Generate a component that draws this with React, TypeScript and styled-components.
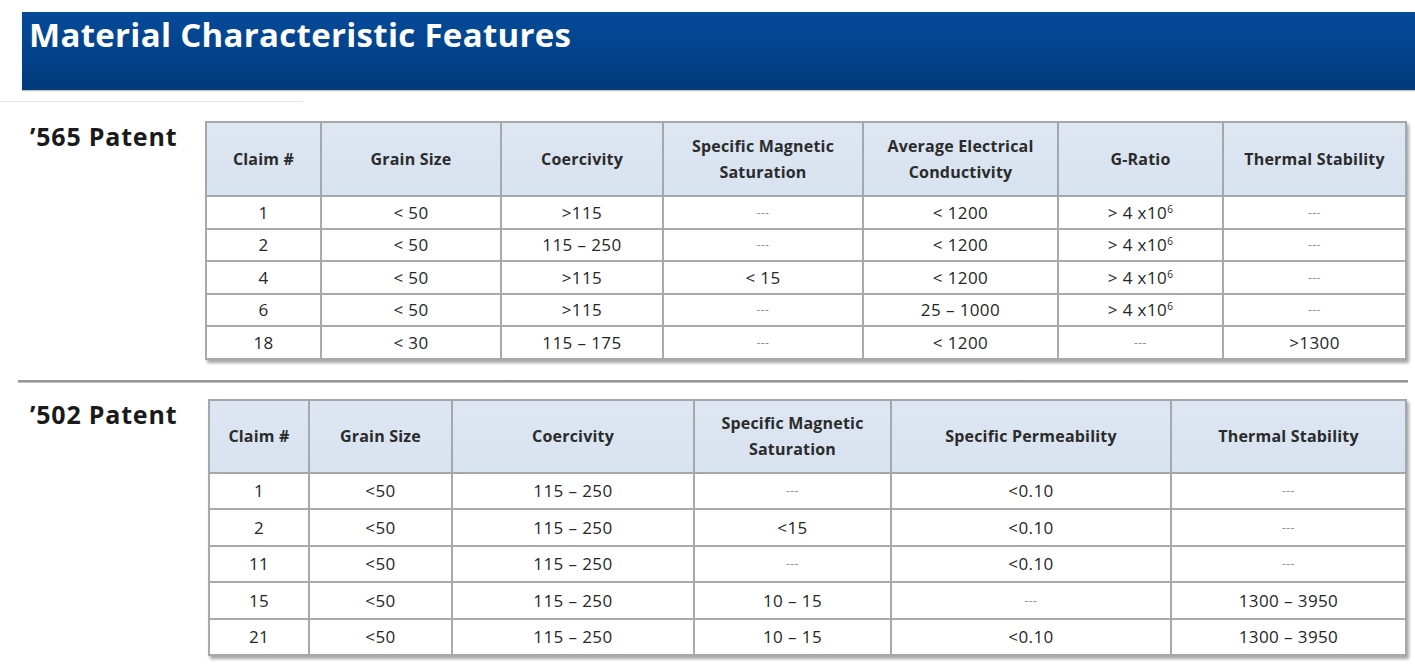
import React from 'react';
import styled, { createGlobalStyle } from 'styled-components';

const GlobalStyle = createGlobalStyle`
  html, body {
    margin: 0;
    padding: 0;
    background: #ffffff;
    font-family: "Open Sans", Lato, "Liberation Sans", sans-serif;
  }
`;

const Page = styled.div`
  width: 1415px;
  height: 666px;
  overflow: hidden;
  padding-top: 12px;
  box-sizing: border-box;
  background: #ffffff;
`;

const TitleBar = styled.header`
  margin-left: 22px;
  height: 78px;
  background: linear-gradient(180deg, #054a98 0%, #03448e 45%, #023a7c 100%);
  box-shadow: 0 1px 1px rgba(0, 0, 0, 0.25);
  h1 {
    margin: 0;
    padding: 3px 0 0 7px;
    color: #ffffff;
    font-size: 33px;
    font-weight: 700;
    letter-spacing: 0.3px;
    line-height: 40px;
  }
`;

const FaintRule = styled.div`
  width: 303px;
  height: 1px;
  margin-top: 11px;
  background: #e6e6e6;
`;

const Section = styled.section<{ $gap: number }>`
  display: flex;
  align-items: flex-start;
  margin-top: ${({ $gap }) => $gap}px;
  padding-left: 30px;
`;

const Label = styled.h2<{ $width: number }>`
  flex: 0 0 ${({ $width }) => $width}px;
  margin: 0;
  padding-top: 0;
  font-size: 25px;
  font-weight: 700;
  letter-spacing: 0.8px;
  line-height: 30px;
  color: #1a1a1a;
`;

const Divider = styled.hr`
  margin: 20px 7px 0 18px;
  height: 3px;
  border: none;
  background: linear-gradient(180deg, #8e8e8e 0%, #9a9a9a 60%, #d4d4d4 100%);
`;

const Table = styled.table`
  border-collapse: collapse;
  table-layout: fixed;
  box-shadow: 2px 3px 3px rgba(0, 0, 0, 0.35);
  border: 2px solid #9c9c9c;
`;

const HeadCell = styled.th<{ $height: number }>`
  height: ${({ $height }) => $height}px;
  padding: 0 2px;
  background: linear-gradient(180deg, #dde6f1 0%, #d8e3f0 100%);
  border: 2px solid #a4a8ad;
  color: #2b2b2b;
  font-size: 16px;
  font-weight: 700;
  letter-spacing: 0.2px;
  line-height: 26px;
  text-align: center;
  vertical-align: middle;
`;

const Cell = styled.td<{ $height: number; $muted?: boolean }>`
  height: ${({ $height }) => $height}px;
  padding: 0 4px;
  background: #ffffff;
  border: 2px solid #a9a9a9;
  color: ${({ $muted }) => ($muted ? '#8f8f8f' : '#262626')};
  font-size: ${({ $muted }) => ($muted ? '12px' : '17px')};
  letter-spacing: 0.4px;
  text-align: center;
  vertical-align: middle;
  sup {
    font-size: 10px;
    line-height: 0;
    vertical-align: 6px;
  }
`;

type Value = React.ReactNode;

interface IPatentTableProps {
  columns: number[];
  headers: Value[];
  rows: Value[][];
  headHeight: number;
  rowHeight: number;
}

const Dash = '---';

const G = (
  <>
    &gt; 4 x10<sup>6</sup>
  </>
);

const PatentTable: React.FC<IPatentTableProps> = ({ columns, headers, rows, headHeight, rowHeight }) => (
  <Table style={{ width: columns.reduce((a, b) => a + b, 0) }}>
    <colgroup>
      {columns.map((w, i) => (
        <col key={i} style={{ width: w }} />
      ))}
    </colgroup>
    <thead>
      <tr>
        {headers.map((h, i) => (
          <HeadCell key={i} $height={headHeight}>
            {h}
          </HeadCell>
        ))}
      </tr>
    </thead>
    <tbody>
      {rows.map((row, r) => (
        <tr key={r}>
          {row.map((v, c) => (
            <Cell key={c} $height={rowHeight} $muted={v === Dash}>
              {v}
            </Cell>
          ))}
        </tr>
      ))}
    </tbody>
  </Table>
);

const headers565: Value[] = [
  'Claim #',
  'Grain Size',
  'Coercivity',
  <>
    Specific Magnetic
    <br />
    Saturation
  </>,
  <>
    Average Electrical
    <br />
    Conductivity
  </>,
  'G-Ratio',
  'Thermal Stability',
];

const rows565: Value[][] = [
  ['1', '< 50', '>115', Dash, '< 1200', G, Dash],
  ['2', '< 50', '115 – 250', Dash, '< 1200', G, Dash],
  ['4', '< 50', '>115', '< 15', '< 1200', G, Dash],
  ['6', '< 50', '>115', Dash, '25 – 1000', G, Dash],
  ['18', '< 30', '115 – 175', Dash, '< 1200', Dash, '>1300'],
];

const headers502: Value[] = [
  'Claim #',
  'Grain Size',
  'Coercivity',
  <>
    Specific Magnetic
    <br />
    Saturation
  </>,
  'Specific Permeability',
  'Thermal Stability',
];

const rows502: Value[][] = [
  ['1', '<50', '115 – 250', Dash, '<0.10', Dash],
  ['2', '<50', '115 – 250', '<15', '<0.10', Dash],
  ['11', '<50', '115 – 250', Dash, '<0.10', Dash],
  ['15', '<50', '115 – 250', '10 – 15', Dash, '1300 – 3950'],
  ['21', '<50', '115 – 250', '10 – 15', '<0.10', '1300 – 3950'],
];

const App: React.FC = () => (
  <>
    <GlobalStyle />
    <Page>
      <TitleBar>
        <h1>Material Characteristic Features</h1>
      </TitleBar>
      <FaintRule />
      <Section $gap={19}>
        <Label $width={175}>’565 Patent</Label>
        <PatentTable
          columns={[115, 180, 162, 200, 195, 165, 183]}
          headers={headers565}
          rows={rows565}
          headHeight={72}
          rowHeight={30.5}
        />
      </Section>
      <Divider />
      <Section $gap={16}>
        <Label $width={178}>’502 Patent</Label>
        <PatentTable
          columns={[100, 143, 242, 197, 280, 235]}
          headers={headers502}
          rows={rows502}
          headHeight={71}
          rowHeight={34.5}
        />
      </Section>
    </Page>
  </>
);

export default App;
